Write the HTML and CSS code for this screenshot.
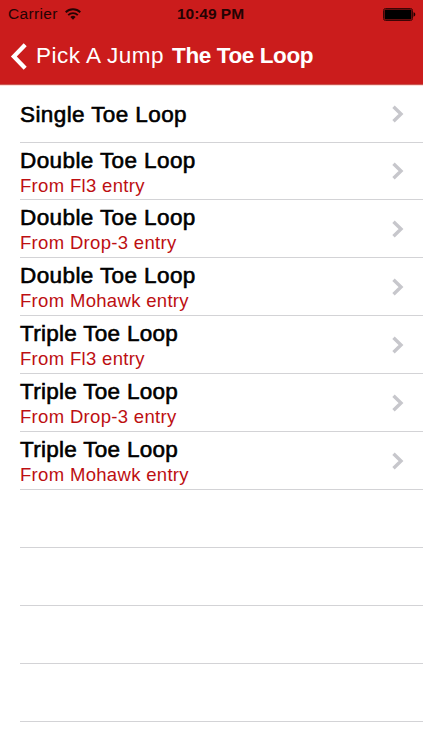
FILE: index.html
```html
<!DOCTYPE html>
<html lang="en">
<head>
    <meta charset="UTF-8">
    <meta name="viewport" content="width=device-width, initial-scale=1.0">
    <title>The Toe Loop</title>
    <link rel="stylesheet" href="styles.css">
</head>
<body>

    <header class="header">
        <!-- Status bar -->
        <div class="status-bar">
            <div class="status-left">
                <span class="carrier">Carrier</span>
                <svg class="wifi" width="16" height="12" viewBox="0 0 16 12" fill="none" stroke="#240303" stroke-width="1.9">
                    <path d="M0.7 4.3a10.4 10.4 0 0 1 14.6 0"/>
                    <path d="M3.2 7.1a6.8 6.8 0 0 1 9.6 0"/>
                    <path d="M8 11.7L5.4 9.1a3.7 3.7 0 0 1 5.2 0z" fill="#240303" stroke="none"/>
                </svg>
            </div>
            <span class="time">10:49 PM</span>
            <svg class="battery" width="33" height="13" viewBox="0 0 33 13">
                <rect x="0.5" y="0.5" width="29" height="12" rx="2" fill="none" stroke="#3c0505"/>
                <rect x="1.5" y="1.5" width="27" height="10" rx="1" fill="#000"/>
                <path d="M30.500 4.300c2.400 .6 2.400 3.800 0 4.400z" fill="#1c0202"/>
            </svg>
        </div>

        <!-- Navigation bar -->
        <nav class="nav-bar">
            <a class="back" href="#">
                <svg class="back-icon" width="18" height="27" viewBox="0 0 18 27" fill="none" stroke="#fff" stroke-width="4.2">
                    <path d="M16.200 1.700L4.800 13.500l11.400 11.800"/>
                </svg>
                <span class="back-text">Pick A Jump</span>
            </a>
            <h1 class="title">The Toe Loop</h1>
        </nav>
    </header>

    <!-- Jump list -->
    <ul class="list">
        <li class="row">
            <div class="cell"><span class="name">Single Toe Loop</span></div>
            <svg class="arrow" width="12" height="18" viewBox="0 0 12 18"><path d="M1.500 1.700L9 9l-7.500 7.300"/></svg>
        </li>
        <li class="row row-short">
            <div class="cell"><span class="name">Double Toe Loop</span><span class="entry">From Fl3 entry</span></div>
            <svg class="arrow" width="12" height="18" viewBox="0 0 12 18"><path d="M1.500 1.700L9 9l-7.500 7.300"/></svg>
        </li>
        <li class="row">
            <div class="cell"><span class="name">Double Toe Loop</span><span class="entry">From Drop-3 entry</span></div>
            <svg class="arrow" width="12" height="18" viewBox="0 0 12 18"><path d="M1.500 1.700L9 9l-7.500 7.300"/></svg>
        </li>
        <li class="row">
            <div class="cell"><span class="name">Double Toe Loop</span><span class="entry">From Mohawk entry</span></div>
            <svg class="arrow" width="12" height="18" viewBox="0 0 12 18"><path d="M1.500 1.700L9 9l-7.500 7.300"/></svg>
        </li>
        <li class="row">
            <div class="cell"><span class="name name-triple">Triple Toe Loop</span><span class="entry">From Fl3 entry</span></div>
            <svg class="arrow" width="12" height="18" viewBox="0 0 12 18"><path d="M1.500 1.700L9 9l-7.500 7.300"/></svg>
        </li>
        <li class="row">
            <div class="cell"><span class="name name-triple">Triple Toe Loop</span><span class="entry">From Drop-3 entry</span></div>
            <svg class="arrow" width="12" height="18" viewBox="0 0 12 18"><path d="M1.500 1.700L9 9l-7.500 7.300"/></svg>
        </li>
        <li class="row">
            <div class="cell"><span class="name name-triple">Triple Toe Loop</span><span class="entry">From Mohawk entry</span></div>
            <svg class="arrow" width="12" height="18" viewBox="0 0 12 18"><path d="M1.500 1.700L9 9l-7.500 7.300"/></svg>
        </li>
        <li class="row"></li>
        <li class="row"></li>
        <li class="row"></li>
        <li class="row"></li>
    </ul>

</body>
</html>
```

FILE: styles.css
```css
:root {
    --bar-color: #cb1c1c;
    --entry-color: #bd0f12;
    --line-color: #d3d3d6;
    --arrow-color: #c7c7cc;
}

* {
    box-sizing: border-box;
}

body {
    font-family: 'Liberation Sans', Arial, sans-serif;
    background-color: #fff;
    margin: 0;
    height: 750px;
    overflow: hidden;
}

.header {
    height: 85px;
    background-color: var(--bar-color);
    border-bottom: 1px solid #c9544f;
    box-shadow: 0 1px 0 #ffdcd8;
}

.status-bar {
    display: grid;
    grid-template-columns: 1fr auto 1fr;
    align-items: center;
    height: 28px;
    padding: 0 7px 0 8px;
    color: #240303;
}

.status-left {
    display: flex;
    align-items: center;
    gap: 7px;
}

.carrier {
    font-size: 15.5px;
    letter-spacing: 0.35px;
}

.time {
    margin-right: 3px;
    font-size: 15.5px;
    font-weight: bold;
}

.battery {
    justify-self: end;
}

.nav-bar {
    display: flex;
    align-items: center;
    height: 56px;
    padding-left: 9px;
    color: #fff;
}

.back {
    display: flex;
    align-items: center;
    gap: 9px;
    color: #fff;
    text-decoration: none;
}

.back-text {
    font-size: 22.5px;
    letter-spacing: 0.5px;
}

.title {
    margin: 0 0 0 8px;
    font-size: 22.5px;
    font-weight: bold;
    letter-spacing: -0.4px;
}

.list {
    list-style: none;
    margin: 0;
    padding: 0 0 0 20px;
}

.row {
    display: flex;
    align-items: center;
    justify-content: space-between;
    height: 58px;
    padding-right: 19px;
    border-bottom: 1px solid var(--line-color);
}

.row-short {
    height: 57px;
}

.cell {
    display: flex;
    flex-direction: column;
    padding-top: 3px;
    white-space: nowrap;
}

/* Medium weight, between regular and bold */
.name {
    font-size: 22.5px;
    line-height: 26px;
    letter-spacing: 0.4px;
    color: #000;
    -webkit-text-stroke: 0.6px #000;
}

.name-triple {
    letter-spacing: 0.28px;
}

.entry {
    font-size: 18.5px;
    line-height: 24px;
    letter-spacing: 0.32px;
    color: var(--entry-color);
}

.arrow {
    fill: none;
    stroke: var(--arrow-color);
    stroke-width: 3.4;
}
```
